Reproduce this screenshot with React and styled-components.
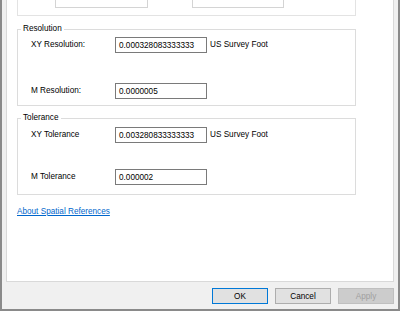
import React from 'react'
import styled, { createGlobalStyle } from 'styled-components'

const GlobalStyle = createGlobalStyle`
  html, body {
    margin: 0;
    padding: 0;
    background: #f0f0f0;
  }
  body {
    font-family: "Liberation Sans", Arial, sans-serif;
    font-size: 8.2px;
    color: #000;
  }
`

const Window = styled.div`
  box-sizing: border-box;
  width: 400px;
  height: 311px;
  display: flex;
  flex-direction: column;
  background: #f0f0f0;
  border-left: 2px solid #8a8a8a;
  border-right: 2px solid #8a8a8a;
  border-bottom: 2px solid #8a8a8a;
  overflow: hidden;
`

const Panel = styled.div`
  box-sizing: border-box;
  margin-left: 4px;
  width: 388px;
  height: 282px;
  flex: none;
  display: flex;
  flex-direction: column;
  align-items: flex-start;
  padding-left: 10px;
  background: #fff;
  border: 1px solid #d9d9d9;
  border-top: none;
`

const ClippedGroup = styled.div`
  box-sizing: border-box;
  width: 339px;
  height: 16px;
  display: flex;
  align-items: flex-start;
  border: 1px solid #e3e3e3;
  border-top: none;
`

const ClippedField = styled.div`
  box-sizing: border-box;
  width: ${(p) => p.width}px;
  height: 8px;
  margin-left: ${(p) => p.offset}px;
  border: 1px solid #d4d4d4;
  border-top: none;
`

const Group = styled.fieldset`
  box-sizing: border-box;
  width: 339px;
  margin: ${(p) => p.top}px 0 0 0;
  padding: ${(p) => p.padTop}px 0 ${(p) => p.padBottom}px 3px;
  border: 1px solid #dcdcdc;
  min-inline-size: 0;
  display: flex;
  flex-direction: column;
  gap: ${(p) => p.gap}px;
`

const Legend = styled.legend`
  margin-left: 0;
  padding: 0 2px;
  line-height: 10px;
  font-size: 8.2px;
`

const Row = styled.div`
  display: flex;
  align-items: center;
  height: 16px;
  padding-left: 10px;
`

const Label = styled.span`
  width: 84px;
  line-height: 10px;
  margin-top: -1px;
`

const Input = styled.div`
  box-sizing: border-box;
  width: 92px;
  height: 16px;
  border: 1px solid #7a7a7a;
  padding-left: 3px;
  display: flex;
  align-items: center;
  background: #fff;
`

const Unit = styled.span`
  margin-left: 3px;
  margin-top: -1px;
`

const Link = styled.a`
  margin-top: 12px;
  line-height: 10px;
  color: #0066cc;
  text-decoration: underline;
  cursor: pointer;
`

const Footer = styled.div`
  flex: 1;
  display: flex;
  justify-content: flex-end;
  align-items: flex-start;
  gap: 7px;
  padding: 6px 4px 0 0;
`

const Button = styled.button`
  box-sizing: border-box;
  width: 56px;
  height: 16px;
  padding: 0;
  font-family: "Liberation Sans", Arial, sans-serif;
  font-size: 8.2px;
  color: ${(p) => (p.disabled ? '#a0a0a0' : '#000')};
  background: ${(p) => (p.disabled ? '#cccccc' : '#e1e1e1')};
  border: 1px solid
    ${(p) => (p.primary ? '#0078d7' : p.disabled ? '#bfbfbf' : '#adadad')};
  border-radius: 0;
`

function Field({ label, value, unit }) {
  return (
    <Row>
      <Label>{label}</Label>
      <Input>{value}</Input>
      {unit && <Unit>{unit}</Unit>}
    </Row>
  )
}

export default function App() {
  return (
    <>
      <GlobalStyle />
      <Window>
        <Panel>
          <ClippedGroup>
            <ClippedField offset={37} width={93} />
            <ClippedField offset={44} width={92} />
          </ClippedGroup>

          <Group top={8} padTop={3} padBottom={6} gap={30}>
            <Legend>Resolution</Legend>
            <Field label='XY Resolution:' value='0.000328083333333' unit='US Survey Foot' />
            <Field label='M Resolution:' value='0.0000005' />
          </Group>

          <Group top={7} padTop={4} padBottom={9} gap={26}>
            <Legend>Tolerance</Legend>
            <Field label='XY Tolerance' value='0.003280833333333' unit='US Survey Foot' />
            <Field label='M Tolerance' value='0.000002' />
          </Group>

          <Link>About Spatial References</Link>
        </Panel>
        <Footer>
          <Button primary>OK</Button>
          <Button>Cancel</Button>
          <Button disabled>Apply</Button>
        </Footer>
      </Window>
    </>
  )
}
